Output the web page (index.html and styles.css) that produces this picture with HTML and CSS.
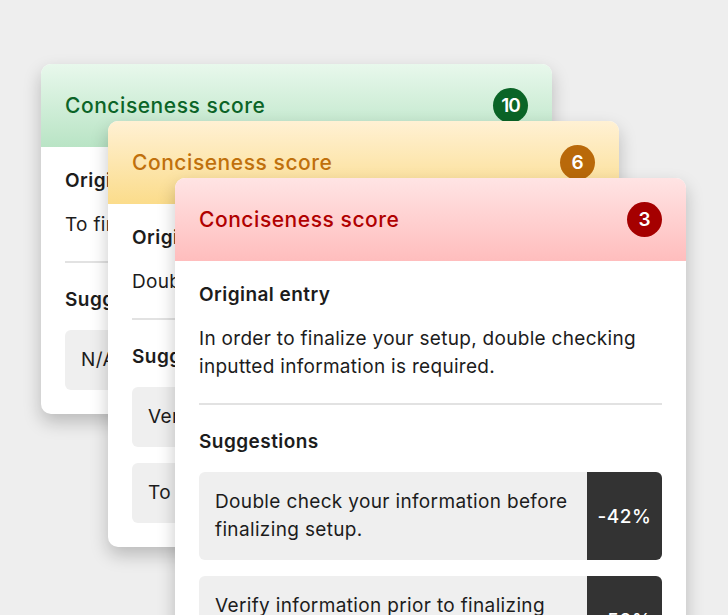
FILE: index.html
```html
<!DOCTYPE html>
<html lang="en">
<head>
<meta charset="utf-8">
<title>Conciseness score</title>
<link rel="stylesheet" href="styles.css">
</head>
<body>
<div class="stack">
  <section class="card card-green">
    <header class="card-head">
      <h2 class="card-title">Conciseness score</h2>
      <span class="badge">10</span>
    </header>
    <div class="card-body">
      <h3 class="label">Original entry</h3>
      <p class="entry">To finalize setup, verify your information.</p>
      <hr class="divider">
      <h3 class="label">Suggestions</h3>
      <ul class="suggestions">
        <li class="suggestion"><span class="s-text">N/A</span></li>
      </ul>
    </div>
  </section>

  <section class="card card-yellow">
    <header class="card-head">
      <h2 class="card-title">Conciseness score</h2>
      <span class="badge">6</span>
    </header>
    <div class="card-body">
      <h3 class="label">Original entry</h3>
      <p class="entry">Double check your information to finalize setup.</p>
      <hr class="divider">
      <h3 class="label">Suggestions</h3>
      <ul class="suggestions">
        <li class="suggestion"><span class="s-text">Verify information to finalize setup.</span><span class="s-score">-20%</span></li>
        <li class="suggestion"><span class="s-text">To finalize setup, verify information.</span><span class="s-score">-18%</span></li>
      </ul>
    </div>
  </section>

  <section class="card card-red">
    <header class="card-head">
      <h2 class="card-title">Conciseness score</h2>
      <span class="badge">3</span>
    </header>
    <div class="card-body">
      <h3 class="label">Original entry</h3>
      <p class="entry">In order to finalize your setup, double checking inputted information is required.</p>
      <hr class="divider">
      <h3 class="label">Suggestions</h3>
      <ul class="suggestions">
        <li class="suggestion"><span class="s-text">Double check your information before finalizing setup.</span><span class="s-score">-42%</span></li>
        <li class="suggestion"><span class="s-text">Verify information prior to finalizing setup.</span><span class="s-score">-50%</span></li>
      </ul>
    </div>
  </section>
</div>
</body>
</html>
```

FILE: styles.css
```css
* { box-sizing: border-box; }

html, body {
  margin: 0;
  height: 100%;
  background: #eeeeee;
  overflow: hidden;
}

body {
  font-family: "Inter", "Lato", sans-serif;
  color: #1c1c1c;
}

.stack {
  display: grid;
  padding: 64px 0 0 41px;
}

.card {
  grid-area: 1 / 1;
  width: 511px;
  align-self: start;
  background: #ffffff;
  border-radius: 10px;
  overflow: hidden;
  box-shadow: 0 8px 18px rgba(0, 0, 0, 0.22);
}

.card-yellow { margin: 57px 0 0 67px; }
.card-red { margin: 114px 0 0 134px; }

.card-head {
  height: 83px;
  display: flex;
  align-items: center;
  justify-content: space-between;
  padding: 0 24px;
}

.card-title {
  margin: 0;
  font-size: 21px;
  font-weight: 500;
  letter-spacing: 0.55px;
}

.badge {
  width: 35px;
  height: 35px;
  border-radius: 50%;
  display: flex;
  align-items: center;
  justify-content: center;
  color: #ffffff;
  font-size: 19px;
  font-weight: 600;
}

.card-green .card-head { background: linear-gradient(#e8f8ec, #b9e4c5); }
.card-green .card-title { color: #0b6427; }
.card-green .badge { background: #0b6427; letter-spacing: -1px; }

.card-yellow .card-head { background: linear-gradient(#fff1d4, #fbdc8b); }
.card-yellow .card-title { color: #c0700c; }
.card-yellow .badge { background: #b9690a; }

.card-red .card-head { background: linear-gradient(#ffe4e4, #ffbdbd); }
.card-red .card-title { color: #b00000; }
.card-red .badge { background: #a50000; }

.card-body {
  padding: 22px 24px 24px;
}

.label {
  margin: 0;
  font-size: 19px;
  font-weight: 600;
  line-height: 24px;
  letter-spacing: 0.45px;
}

.entry {
  margin: 18px 0 0;
  font-size: 19px;
  line-height: 28px;
  letter-spacing: 0.3px;
}

.divider {
  border: 0;
  border-top: 2px solid #e2e2e2;
  margin: 22px 0 25px;
}

.suggestions {
  list-style: none;
  margin: 18px 0 0;
  padding: 0;
  display: flex;
  flex-direction: column;
  gap: 16px;
}

.suggestion {
  display: flex;
  background: #efefef;
  border-radius: 6px;
  overflow: hidden;
  min-height: 59px;
}

.s-text {
  flex: 1;
  padding: 16px;
  font-size: 19px;
  line-height: 28px;
  letter-spacing: 0.35px;
  align-self: center;
}

.s-score {
  width: 75px;
  flex: none;
  background: #333333;
  color: #ffffff;
  display: flex;
  align-items: center;
  justify-content: center;
  font-size: 19px;
  font-weight: 500;
  letter-spacing: 0.5px;
}
```
